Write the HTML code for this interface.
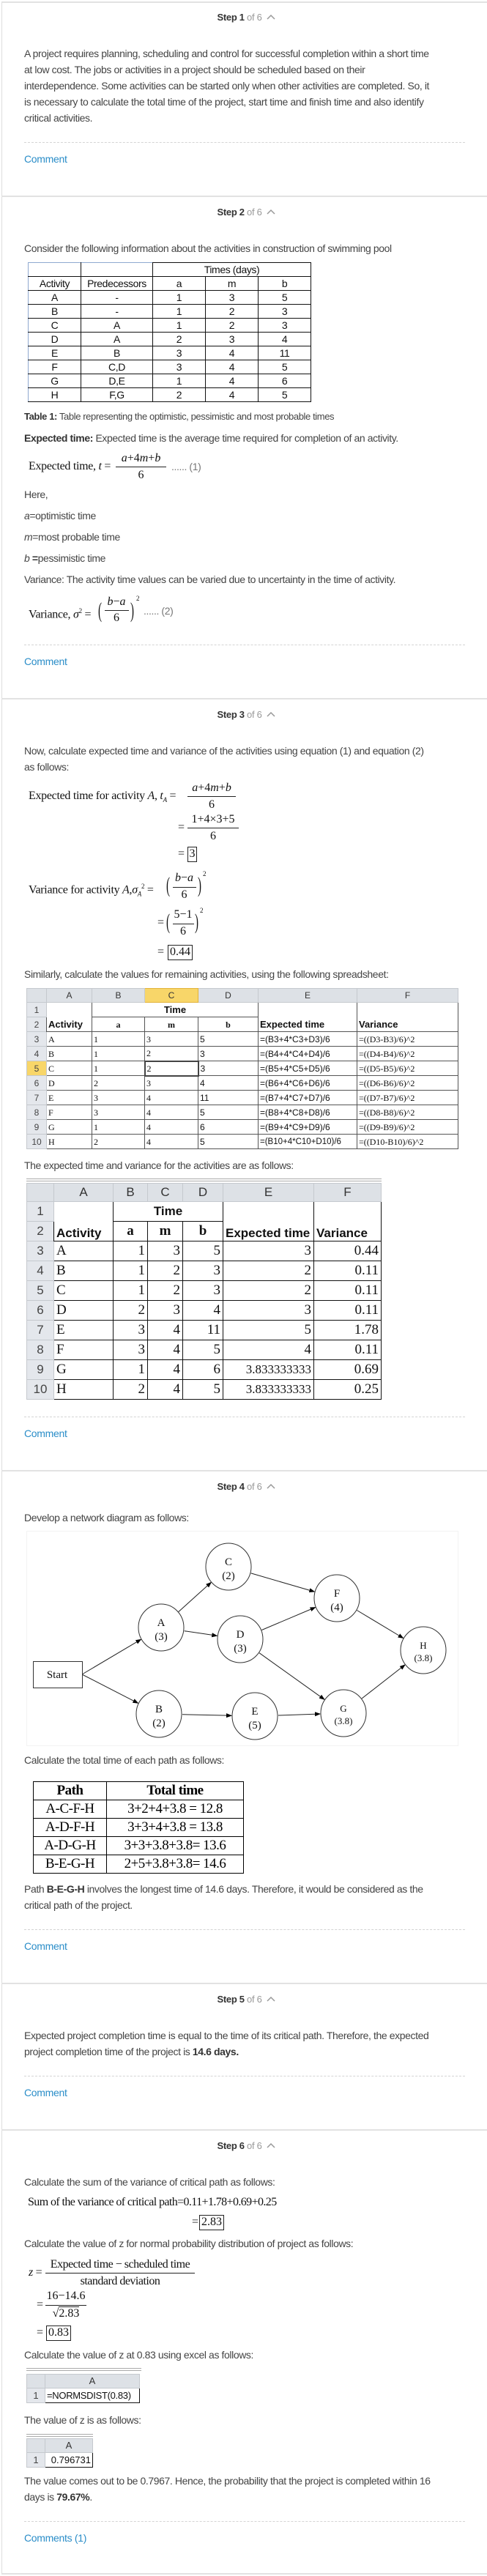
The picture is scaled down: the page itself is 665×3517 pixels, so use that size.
<!DOCTYPE html>
<html><head><meta charset="utf-8"><style>
*{box-sizing:border-box;margin:0;padding:0}
body{width:665px;height:3517px;position:relative;background:#fff;overflow:hidden;font-family:"Liberation Sans",Arial,sans-serif;color:#444}
.a{position:absolute;white-space:nowrap}
.t{position:absolute;left:33px;font-size:14px;line-height:16px;letter-spacing:-0.4px;color:#444;white-space:nowrap}
.t b{color:#333}
.c{position:absolute;left:33px;font-size:14px;line-height:16px;letter-spacing:-0.3px;color:#2a8dc8}
.d{position:absolute;left:33px;width:602px;border-top:1px dashed #d4d4d4;height:0}
.h{position:absolute;left:2px;width:663px;border-top:2px solid #e2e2e2;height:0}
.st{position:absolute;left:0;width:672px;text-align:center;font-size:13px;line-height:16px;color:#333;letter-spacing:-0.3px}
.st b{font-weight:bold}.st span{color:#999}
.st svg{vertical-align:middle;margin-left:6px;margin-top:-3px}
.m{position:absolute;font-family:"Liberation Serif","Times New Roman",serif;font-size:16px;line-height:18px;color:#111;white-space:nowrap;letter-spacing:-0.3px}
.fr{position:absolute;font-family:"Liberation Serif",serif;font-size:16px;line-height:18px;color:#111;text-align:center;white-space:nowrap}
.ln{position:absolute;height:0;border-top:1px solid #222}
.bx{position:absolute;border:1px solid #222;font-family:"Liberation Serif",serif;font-size:16px;line-height:18px;color:#111;text-align:center}
table{border-collapse:collapse;table-layout:fixed;position:absolute}
.t1 td{border:1px solid #111;text-align:center;font-size:14px;height:19px;padding:0;color:#111;letter-spacing:-0.4px;line-height:17px}
.xs td{border:1px solid #555;font-size:12px;padding:0 2px;height:20px;color:#111;line-height:18px;white-space:nowrap;overflow:hidden}
.xs .hd td{background:#dde1e6;border:1px solid #c5c9ce;text-align:center;color:#333;height:19px}
.xs td.rh{background:#e4e7ec;border:1px solid #c5c9ce;text-align:center;color:#444}
.sr{font-family:"Liberation Serif",serif;font-size:14px}
.x2 td{border:1px solid #111;font-size:19px;height:27px;padding:0 3px;color:#111;white-space:nowrap;overflow:hidden;font-family:"Liberation Serif",serif;text-align:right}
.x2 .hd td{background:#dde1e6;border:1px solid #c5c9ce;text-align:center;font-family:"Liberation Sans",sans-serif;font-size:17px;color:#333;height:25px}
.x2 td.rh{background:#e4e7ec;border:1px solid #c5c9ce;text-align:center;font-family:"Liberation Sans",sans-serif;font-size:17px;color:#444}
.x2 td.l{text-align:left}
.x2 td.s{font-family:"Liberation Sans",sans-serif;font-weight:bold;font-size:17px;text-align:center}
.pt td{border:1.5px solid #000;font-family:"Liberation Serif",serif;font-size:19px;text-align:center;height:25px;padding:0;color:#000;letter-spacing:-0.5px;line-height:22px}
</style></head><body>
<div class="a" style="left:2px;top:2px;width:663px;height:3513px;border-left:1px solid #ddd;border-top:2px solid #e2e2e2;border-bottom:2px solid #e2e2e2"></div>

<!-- STEP 1 -->
<div class="st" style="top:16px"><b>Step 1</b> <span>of 6</span><svg width="12" height="8" viewBox="0 0 12 8"><path d="M1 7 L6 2 L11 7" fill="none" stroke="#999" stroke-width="1.5"/></svg></div>
<div class="t" style="top:65px">A project requires planning, scheduling and control for successful completion within a short time</div>
<div class="t" style="top:87px">at low cost. The jobs or activities in a project should be scheduled based on their</div>
<div class="t" style="top:109px">interdependence. Some activities can be started only when other activities are completed. So, it</div>
<div class="t" style="top:131px">is necessary to calculate the total time of the project, start time and finish time and also identify</div>
<div class="t" style="top:153px">critical activities.</div>
<div class="d" style="top:194px"></div>
<div class="c" style="top:209px">Comment</div>
<div class="h" style="top:267px"></div>

<!-- STEP 2 -->
<div class="st" style="top:282px"><b>Step 2</b> <span>of 6</span><svg width="12" height="8" viewBox="0 0 12 8"><path d="M1 7 L6 2 L11 7" fill="none" stroke="#999" stroke-width="1.5"/></svg></div>
<div class="t" style="top:331px">Consider the following information about the activities in construction of swimming pool</div>
<table class="t1" style="left:38px;top:358px;width:386px">
<colgroup><col style="width:72px"><col style="width:98px"><col style="width:72px"><col style="width:72px"><col style="width:72px"></colgroup>
<tr><td style="border-left-color:#8fa9d0;border-top-color:#8fa9d0"></td><td style="border-top-color:#8fa9d0"></td><td colspan="3">Times (days)</td></tr>
<tr><td style="border-left-color:#8fa9d0">Activity</td><td>Predecessors</td><td>a</td><td>m</td><td>b</td></tr>
<tr><td style="border-left-color:#8fa9d0">A</td><td>-</td><td>1</td><td>3</td><td>5</td></tr>
<tr><td style="border-left-color:#8fa9d0">B</td><td>-</td><td>1</td><td>2</td><td>3</td></tr>
<tr><td style="border-left-color:#8fa9d0">C</td><td>A</td><td>1</td><td>2</td><td>3</td></tr>
<tr><td style="border-left-color:#8fa9d0">D</td><td>A</td><td>2</td><td>3</td><td>4</td></tr>
<tr><td style="border-left-color:#8fa9d0">E</td><td>B</td><td>3</td><td>4</td><td>11</td></tr>
<tr><td style="border-left-color:#8fa9d0">F</td><td>C,D</td><td>3</td><td>4</td><td>5</td></tr>
<tr><td style="border-left-color:#8fa9d0">G</td><td>D,E</td><td>1</td><td>4</td><td>6</td></tr>
<tr><td style="border-left-color:#8fa9d0">H</td><td>F,G</td><td>2</td><td>4</td><td>5</td></tr>
</table>
<div class="t" style="top:561px;font-size:13px"><b>Table 1:</b> Table representing the optimistic, pessimistic and most probable times</div>
<div class="t" style="top:590px"><b>Expected time:</b> Expected time is the average time required for completion of an activity.</div>
<div class="m" style="left:39px;top:628px">Expected time, <i>t</i> =</div>
<div class="fr" style="left:158px;top:617px;width:69px"><i>a</i>+4<i>m</i>+<i>b</i></div>
<div class="ln" style="left:158px;top:637px;width:69px"></div>
<div class="fr" style="left:158px;top:640px;width:69px">6</div>
<div class="t" style="left:234px;top:629px;color:#777">...... (1)</div>
<div class="t" style="top:667px">Here,</div>
<div class="t" style="top:696px"><i>a</i>=optimistic time</div>
<div class="t" style="top:725px"><i>m</i>=most probable time</div>
<div class="t" style="top:754px"><i>b</i> <b>=</b>pessimistic time</div>
<div class="t" style="top:783px">Variance: The activity time values can be varied due to uncertainty in the time of activity.</div>
<div class="m" style="left:39px;top:825px">Variance, <i>σ</i><sup style="font-size:9px">2</sup> =</div>
<div class="m" style="left:134px;top:817px;font-size:30px;line-height:34px;transform:scaleX(0.5);transform-origin:left">(</div>
<div class="fr" style="left:142px;top:813px;width:34px"><i>b</i>−<i>a</i></div>
<div class="ln" style="left:143px;top:833px;width:33px"></div>
<div class="fr" style="left:142px;top:835px;width:34px">6</div>
<div class="m" style="left:178px;top:817px;font-size:30px;line-height:34px;transform:scaleX(0.5);transform-origin:left">)</div>
<div class="m" style="left:186px;top:812px;font-size:9px;line-height:10px">2</div>
<div class="t" style="left:196px;top:826px;color:#777">...... (2)</div>
<div class="d" style="top:880px"></div>
<div class="c" style="top:895px">Comment</div>
<div class="h" style="top:953px"></div>

<!-- STEP 3 -->
<div class="st" style="top:968px"><b>Step 3</b> <span>of 6</span><svg width="12" height="8" viewBox="0 0 12 8"><path d="M1 7 L6 2 L11 7" fill="none" stroke="#999" stroke-width="1.5"/></svg></div>
<div class="t" style="top:1017px">Now, calculate expected time and variance of the activities using equation (1) and equation (2)</div>
<div class="t" style="top:1039px">as follows:</div>
<div class="m" style="left:39px;top:1078px">Expected time for activity <i>A</i>, <i>t</i><sub style="font-size:9px"><i>A</i></sub> =</div>
<div class="fr" style="left:256px;top:1067px;width:66px"><i>a</i>+4<i>m</i>+<i>b</i></div>
<div class="ln" style="left:256px;top:1087px;width:66px"></div>
<div class="fr" style="left:256px;top:1090px;width:66px">6</div>
<div class="m" style="left:243px;top:1121px">=</div>
<div class="fr" style="left:256px;top:1110px;width:70px">1+4×3+5</div>
<div class="ln" style="left:256px;top:1130px;width:70px"></div>
<div class="fr" style="left:256px;top:1133px;width:70px">6</div>
<div class="m" style="left:243px;top:1157px">=</div>
<div class="bx" style="left:256px;top:1156px;width:13px;height:21px">3</div>
<div class="m" style="left:39px;top:1201px">Variance for activity <i>A</i>,<i>σ</i><sub style="font-size:9px"><i>A</i></sub><sup style="font-size:9px">2</sup> =</div>
<div class="m" style="left:227px;top:1192px;font-size:30px;line-height:34px;transform:scaleX(0.5);transform-origin:left">(</div>
<div class="fr" style="left:235px;top:1190px;width:33px"><i>b</i>−<i>a</i></div>
<div class="ln" style="left:236px;top:1211px;width:32px"></div>
<div class="fr" style="left:235px;top:1213px;width:33px">6</div>
<div class="m" style="left:270px;top:1192px;font-size:30px;line-height:34px;transform:scaleX(0.5);transform-origin:left">)</div>
<div class="m" style="left:277px;top:1188px;font-size:9px;line-height:10px">2</div>
<div class="m" style="left:215px;top:1251px">=</div>
<div class="m" style="left:227px;top:1242px;font-size:30px;line-height:34px;transform:scaleX(0.5);transform-origin:left">(</div>
<div class="fr" style="left:235px;top:1240px;width:30px">5−1</div>
<div class="ln" style="left:236px;top:1261px;width:29px"></div>
<div class="fr" style="left:235px;top:1263px;width:30px">6</div>
<div class="m" style="left:266px;top:1242px;font-size:30px;line-height:34px;transform:scaleX(0.5);transform-origin:left">)</div>
<div class="m" style="left:273px;top:1238px;font-size:9px;line-height:10px">2</div>
<div class="m" style="left:215px;top:1291px">=</div>
<div class="bx" style="left:229px;top:1290px;width:34px;height:21px">0.44</div>
<div class="t" style="top:1322px">Similarly, calculate the values for remaining activities, using the following spreadsheet:</div>

<table class="xs" style="left:36px;top:1349px;width:589px">
<colgroup><col style="width:27px"><col style="width:62px"><col style="width:72px"><col style="width:73px"><col style="width:82px"><col style="width:135px"><col style="width:138px"></colgroup>
<tr class="hd"><td></td><td>A</td><td>B</td><td style="background:#f8d669;border-color:#e2b33a">C</td><td>D</td><td>E</td><td>F</td></tr>
<tr><td class="rh">1</td><td rowspan="2" style="vertical-align:bottom;font-weight:bold;font-size:13px;border-bottom:1px solid #555">Activity</td><td colspan="3" style="text-align:center;font-weight:bold;font-size:13px">Time</td><td rowspan="2" style="vertical-align:bottom;font-weight:bold;font-size:13px">Expected time</td><td rowspan="2" style="vertical-align:bottom;font-weight:bold;font-size:13px">Variance</td></tr>
<tr><td class="rh">2</td><td class="sr" style="text-align:center;font-weight:bold">a</td><td class="sr" style="text-align:center;font-weight:bold">m</td><td class="sr" style="text-align:center;font-weight:bold">b</td></tr>
<tr><td class="rh">3</td><td class="sr">A</td><td class="sr">1</td><td class="sr">3</td><td>5</td><td>=(B3+4*C3+D3)/6</td><td class="sr">=((D3-B3)/6)^2</td></tr>
<tr><td class="rh">4</td><td class="sr">B</td><td class="sr">1</td><td class="sr">2</td><td>3</td><td>=(B4+4*C4+D4)/6</td><td class="sr">=((D4-B4)/6)^2</td></tr>
<tr><td class="rh" style="background:#f8d669">5</td><td class="sr">C</td><td class="sr">1</td><td class="sr" style="border:2px solid #444">2</td><td>3</td><td>=(B5+4*C5+D5)/6</td><td class="sr">=((D5-B5)/6)^2</td></tr>
<tr><td class="rh">6</td><td class="sr">D</td><td class="sr">2</td><td class="sr">3</td><td>4</td><td>=(B6+4*C6+D6)/6</td><td class="sr">=((D6-B6)/6)^2</td></tr>
<tr><td class="rh">7</td><td class="sr">E</td><td class="sr">3</td><td class="sr">4</td><td>11</td><td>=(B7+4*C7+D7)/6</td><td class="sr">=((D7-B7)/6)^2</td></tr>
<tr><td class="rh">8</td><td class="sr">F</td><td class="sr">3</td><td class="sr">4</td><td>5</td><td>=(B8+4*C8+D8)/6</td><td class="sr">=((D8-B8)/6)^2</td></tr>
<tr><td class="rh">9</td><td class="sr">G</td><td class="sr">1</td><td class="sr">4</td><td>6</td><td>=(B9+4*C9+D9)/6</td><td class="sr">=((D9-B9)/6)^2</td></tr>
<tr><td class="rh">10</td><td class="sr">H</td><td class="sr">2</td><td class="sr">4</td><td>5</td><td style="font-size:11.5px">=(B10+4*C10+D10)/6</td><td class="sr">=((D10-B10)/6)^2</td></tr>
</table>
<div class="t" style="top:1583px">The expected time and variance for the activities are as follows:</div>
<div class="a" style="left:36px;top:1609px;width:485px;height:4px;border-top:1px solid #aaa;border-bottom:1px solid #aaa"></div>
<table class="x2" style="left:36px;top:1615px;width:484px">
<colgroup><col style="width:37px"><col style="width:81px"><col style="width:47px"><col style="width:48px"><col style="width:55px"><col style="width:124px"><col style="width:92px"></colgroup>
<tr class="hd"><td></td><td>A</td><td>B</td><td>C</td><td>D</td><td>E</td><td>F</td></tr>
<tr><td class="rh">1</td><td rowspan="2" class="s l" style="vertical-align:bottom;text-align:left">Activity</td><td colspan="3" class="s">Time</td><td rowspan="2" class="s" style="vertical-align:bottom;text-align:left">Expected time</td><td rowspan="2" class="s" style="vertical-align:bottom;text-align:left">Variance</td></tr>
<tr><td class="rh">2</td><td style="text-align:center;font-weight:bold">a</td><td style="text-align:center;font-weight:bold">m</td><td style="text-align:center;font-weight:bold">b</td></tr>
<tr><td class="rh">3</td><td class="l">A</td><td>1</td><td>3</td><td>5</td><td>3</td><td>0.44</td></tr>
<tr><td class="rh">4</td><td class="l">B</td><td>1</td><td>2</td><td>3</td><td>2</td><td>0.11</td></tr>
<tr><td class="rh">5</td><td class="l">C</td><td>1</td><td>2</td><td>3</td><td>2</td><td>0.11</td></tr>
<tr><td class="rh">6</td><td class="l">D</td><td>2</td><td>3</td><td>4</td><td>3</td><td>0.11</td></tr>
<tr><td class="rh">7</td><td class="l">E</td><td>3</td><td>4</td><td>11</td><td>5</td><td>1.78</td></tr>
<tr><td class="rh">8</td><td class="l">F</td><td>3</td><td>4</td><td>5</td><td>4</td><td>0.11</td></tr>
<tr><td class="rh">9</td><td class="l">G</td><td>1</td><td>4</td><td>6</td><td style="font-size:17px">3.833333333</td><td>0.69</td></tr>
<tr><td class="rh">10</td><td class="l">H</td><td>2</td><td>4</td><td>5</td><td style="font-size:17px">3.833333333</td><td>0.25</td></tr>
</table>
<div class="d" style="top:1934px"></div>
<div class="c" style="top:1949px">Comment</div>
<div class="h" style="top:2007px"></div>

<!-- STEP 4 -->
<div class="st" style="top:2022px"><b>Step 4</b> <span>of 6</span><svg width="12" height="8" viewBox="0 0 12 8"><path d="M1 7 L6 2 L11 7" fill="none" stroke="#999" stroke-width="1.5"/></svg></div>
<div class="t" style="top:2064px">Develop a network diagram as follows:</div>
<svg class="a" style="left:0;top:2090px" width="665" height="295" viewBox="0 0 665 295">
<defs><marker id="ar" markerWidth="8" markerHeight="8" refX="7" refY="4" orient="auto" markerUnits="userSpaceOnUse"><path d="M0 1 L8 4 L0 7z" fill="#000"/></marker></defs>
<rect x="36.5" y="0.5" width="589" height="293" fill="none" stroke="#f2f2f2"/>
<g stroke="#222" stroke-width="1" fill="none" marker-end="url(#ar)">
<line x1="112" y1="196" x2="192.5" y2="148.3"/>
<line x1="112" y1="196" x2="188.5" y2="235.3"/>
<line x1="243.7" y1="110.6" x2="288.3" y2="70.4"/>
<line x1="251.7" y1="136.7" x2="296.3" y2="143.3"/>
<line x1="342.7" y1="57.9" x2="429.3" y2="83.1"/>
<line x1="357.4" y1="135.5" x2="430.6" y2="104.5"/>
<line x1="354" y1="166.7" x2="443" y2="230.3"/>
<line x1="249" y1="250.7" x2="316" y2="252.3"/>
<line x1="380" y1="252" x2="437" y2="250"/>
<line x1="487.4" y1="108.5" x2="550.6" y2="146.5"/>
<line x1="494" y1="229" x2="553" y2="183"/>
</g>
<g stroke="#333" stroke-width="1" fill="#fff">
<rect x="45.5" y="178.5" width="67" height="36"/>
<ellipse cx="312" cy="49" rx="31" ry="32"/>
<ellipse cx="460" cy="92" rx="31" ry="32"/>
<ellipse cx="220" cy="132" rx="31" ry="32"/>
<ellipse cx="328" cy="148" rx="31" ry="32"/>
<ellipse cx="578" cy="163" rx="31" ry="32"/>
<ellipse cx="217" cy="250" rx="31" ry="32"/>
<ellipse cx="348" cy="253" rx="31" ry="32"/>
<ellipse cx="469" cy="249" rx="31" ry="32"/>
</g>
<g font-family="Liberation Serif,serif" font-size="15" fill="#111" text-anchor="middle">
<text x="78" y="201">Start</text>
<text x="312" y="47">C</text><text x="312" y="66">(2)</text>
<text x="460" y="90">F</text><text x="460" y="109">(4)</text>
<text x="220" y="130">A</text><text x="220" y="149">(3)</text>
<text x="328" y="146">D</text><text x="328" y="165">(3)</text>
<text x="578" y="161" font-size="13">H</text><text x="578" y="178" font-size="13">(3.8)</text>
<text x="217" y="248">B</text><text x="217" y="267">(2)</text>
<text x="348" y="251">E</text><text x="348" y="270">(5)</text>
<text x="469" y="247" font-size="13">G</text><text x="469" y="264" font-size="13">(3.8)</text>
</g>
</svg>
<div class="t" style="top:2395px">Calculate the total time of each path as follows:</div>
<table class="pt" style="left:45px;top:2432px;width:287px">
<colgroup><col style="width:100px"><col style="width:187px"></colgroup>
<tr><td style="font-weight:bold">Path</td><td style="font-weight:bold">Total time</td></tr>
<tr><td>A-C-F-H</td><td>3+2+4+3.8 = 12.8</td></tr>
<tr><td>A-D-F-H</td><td>3+3+4+3.8 = 13.8</td></tr>
<tr><td>A-D-G-H</td><td>3+3+3.8+3.8= 13.6</td></tr>
<tr><td>B-E-G-H</td><td>2+5+3.8+3.8= 14.6</td></tr>
</table>
<div class="t" style="top:2571px">Path <b>B-E-G-H</b> involves the longest time of 14.6 days. Therefore, it would be considered as the</div>
<div class="t" style="top:2593px">critical path of the project.</div>
<div class="d" style="top:2634px"></div>
<div class="c" style="top:2649px">Comment</div>
<div class="h" style="top:2707px"></div>

<!-- STEP 5 -->
<div class="st" style="top:2722px"><b>Step 5</b> <span>of 6</span><svg width="12" height="8" viewBox="0 0 12 8"><path d="M1 7 L6 2 L11 7" fill="none" stroke="#999" stroke-width="1.5"/></svg></div>
<div class="t" style="top:2771px">Expected project completion time is equal to the time of its critical path. Therefore, the expected</div>
<div class="t" style="top:2793px">project completion time of the project is <b>14.6 days.</b></div>
<div class="d" style="top:2834px"></div>
<div class="c" style="top:2849px">Comment</div>
<div class="h" style="top:2907px"></div>

<!-- STEP 6 -->
<div class="st" style="top:2922px"><b>Step 6</b> <span>of 6</span><svg width="12" height="8" viewBox="0 0 12 8"><path d="M1 7 L6 2 L11 7" fill="none" stroke="#999" stroke-width="1.5"/></svg></div>
<div class="t" style="top:2971px">Calculate the sum of the variance of critical path as follows:</div>
<div class="m" style="left:38px;top:2998px;letter-spacing:-0.6px">Sum of the variance of critical path=0.11+1.78+0.69+0.25</div>
<div class="m" style="left:262px;top:3025px">=</div>
<div class="bx" style="left:272px;top:3024px;width:34px;height:21px">2.83</div>
<div class="t" style="top:3055px">Calculate the value of z for normal probability distribution of project as follows:</div>
<div class="m" style="left:39px;top:3094px"><i>z</i> =</div>
<div class="fr" style="left:62px;top:3083px;width:204px;letter-spacing:-0.5px">Expected time − scheduled time</div>
<div class="ln" style="left:62px;top:3103px;width:204px"></div>
<div class="fr" style="left:62px;top:3106px;width:204px;letter-spacing:-0.5px">standard deviation</div>
<div class="m" style="left:50px;top:3138px">=</div>
<div class="fr" style="left:62px;top:3126px;width:56px">16−14.6</div>
<div class="ln" style="left:62px;top:3147px;width:56px"></div>
<div class="fr" style="left:62px;top:3150px;width:56px">√<span style="border-top:1px solid #222">2.83</span></div>
<div class="m" style="left:50px;top:3176px">=</div>
<div class="bx" style="left:63px;top:3175px;width:34px;height:21px">0.83</div>
<div class="t" style="top:3207px">Calculate the value of z at 0.83 using excel as follows:</div>
<div class="a" style="left:36px;top:3233px;width:157px;height:4px;border-top:1px solid #aaa;border-bottom:1px solid #aaa"></div>
<table class="xs" style="left:36px;top:3241px;width:154px">
<colgroup><col style="width:25px"><col style="width:129px"></colgroup>
<tr class="hd"><td></td><td style="font-size:13px">A</td></tr>
<tr><td class="rh" style="font-size:13px">1</td><td style="border:1px solid #111;font-size:13px;letter-spacing:-0.3px">=NORMSDIST(0.83)</td></tr>
</table>
<div class="t" style="top:3296px">The value of z is as follows:</div>
<div class="a" style="left:36px;top:3323px;width:91px;height:4px;border-top:1px solid #aaa;border-bottom:1px solid #aaa"></div>
<table class="xs" style="left:36px;top:3329px;width:90px">
<colgroup><col style="width:25px"><col style="width:65px"></colgroup>
<tr class="hd"><td></td><td style="font-size:13px">A</td></tr>
<tr><td class="rh" style="font-size:13px">1</td><td style="border:1px solid #111;font-size:13px;text-align:right">0.796731</td></tr>
</table>
<div class="t" style="top:3379px">The value comes out to be 0.7967. Hence, the probability that the project is completed within 16</div>
<div class="t" style="top:3401px">days is <b>79.67%</b>.</div>
<div class="d" style="top:3442px"></div>
<div class="c" style="top:3457px">Comments (1)</div>
</body></html>
